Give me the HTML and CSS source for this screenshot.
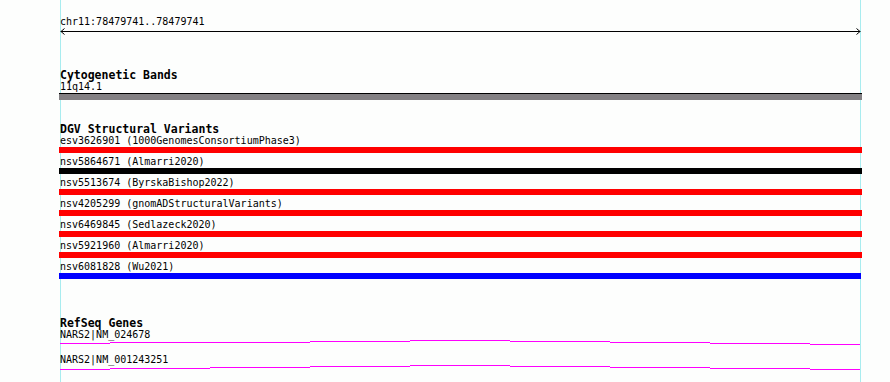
FILE: index.html
```html
<!DOCTYPE html>
<html lang="en">
<head>
    <meta charset="UTF-8">
    <meta name="viewport" content="width=device-width, initial-scale=1.0">
    <title>chr11:78479741..78479741</title>
    <link rel="stylesheet" href="styles.css">
</head>
<body>
    <div class="view">
        <div class="ruler">
            <div class="label">chr11:78479741..78479741</div>
            <svg class="ruler-line" width="801" height="8" viewBox="0 0 801 8">
                <line x1="0.5" y1="4.5" x2="800.5" y2="4.5" stroke="#000" stroke-width="1.2"/>
                <polyline points="4.5,1.5 1,4.5 4.5,7.5" fill="none" stroke="#000" stroke-width="1"/>
                <polyline points="796.5,1.5 800,4.5 796.5,7.5" fill="none" stroke="#000" stroke-width="1"/>
            </svg>
        </div>

        <div class="track cyto">
            <div class="track-title">Cytogenetic Bands</div>
            <div class="label">11q14.1</div>
            <div class="band"></div>
        </div>

        <div class="track dgv">
            <div class="track-title">DGV Structural Variants</div>
            <div class="feature">
                <div class="label">esv3626901 (1000GenomesConsortiumPhase3)</div>
                <div class="bar red"></div>
            </div>
            <div class="feature">
                <div class="label">nsv5864671 (Almarri2020)</div>
                <div class="bar black"></div>
            </div>
            <div class="feature">
                <div class="label">nsv5513674 (ByrskaBishop2022)</div>
                <div class="bar red"></div>
            </div>
            <div class="feature">
                <div class="label">nsv4205299 (gnomADStructuralVariants)</div>
                <div class="bar red"></div>
            </div>
            <div class="feature">
                <div class="label">nsv6469845 (Sedlazeck2020)</div>
                <div class="bar red"></div>
            </div>
            <div class="feature">
                <div class="label">nsv5921960 (Almarri2020)</div>
                <div class="bar red"></div>
            </div>
            <div class="feature">
                <div class="label">nsv6081828 (Wu2021)</div>
                <div class="bar blue"></div>
            </div>
        </div>

        <div class="track genes">
            <div class="track-title">RefSeq Genes</div>
            <div class="gene">
                <div class="label">NARS2|NM_024678</div>
                <svg class="gene-line" width="801" height="13" viewBox="0 0 801 13">
                    <path d="M0 3.5H50M50 2.5H150M150 2.5H250M250 1.5H350M350 0.5H450M450 1.5H550M550 2.5H650M650 3.5H750M750 4.5H800" fill="none" stroke="#f0f" stroke-width="1"/>
                </svg>
            </div>
            <div class="gene">
                <div class="label">NARS2|NM_001243251</div>
                <svg class="gene-line" width="801" height="13" viewBox="0 0 801 13">
                    <path d="M0 4.5H50M50 3.5H150M150 2.5H250M250 1.5H350M350 0.5H450M450 1.5H550M550 2.5H650M650 3.5H750M750 4.5H800" fill="none" stroke="#f0f" stroke-width="1"/>
                </svg>
            </div>
        </div>
    </div>
</body>
</html>
```

FILE: styles.css
```css
body {
    margin: 0;
    background-color: #fdfefd;
    font-family: "DejaVu Sans Mono", "Liberation Mono", monospace;
    color: #000;
}
.view {
    margin-left: 60px;
    width: 799px;
    min-height: 382px;
    border-left: 1px solid #a8ecef;
    border-right: 1px solid #a8ecef;
}
.label {
    margin-left: -1px;
    padding-top: 2px;
    font-size: 10px;
    line-height: 10px;
    white-space: nowrap;
}
.ruler {
    padding-top: 15px;
}
.ruler-line {
    display: block;
    margin-left: -1px;
}
.track-title {
    margin-left: -1px;
    padding-top: 2px;
    font-size: 11.5px;
    font-weight: bold;
    line-height: 10px;
}
.cyto {
    margin-top: 33px;
}
.band {
    margin: 1px 0 0 -2px;
    width: 803px;
    height: 6px;
    background-color: #838083;
    border-top: 1px solid #000;
}
.dgv {
    margin-top: 22px;
}
.feature {
    margin-bottom: 2px;
}
.bar {
    margin: 1px 0 0 -2px;
    width: 803px;
    height: 6px;
}
.red {
    background-color: #ff0000;
}
.black {
    background-color: #000;
}
.blue {
    width: 802px;
    background-color: #0000ff;
}
.genes {
    margin-top: 37px;
}
.gene-line {
    display: block;
    margin-left: -1px;
}
```
